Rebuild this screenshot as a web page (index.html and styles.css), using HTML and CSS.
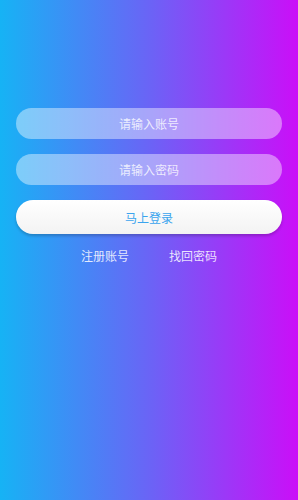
FILE: index.html
```html
<!DOCTYPE html>
<html lang="zh">
<head>
    <meta charset="UTF-8">
    <title>登录</title>
    <link rel="stylesheet" href="styles.css">
</head>
<body>
    <div class="login-page">
        <form class="login-form">
            <input class="field" type="text" placeholder="请输入账号">
            <input class="field" type="password" placeholder="请输入密码">
            <button class="login-btn" type="button">马上登录</button>
            <div class="links">
                <a href="#">注册账号</a>
                <a href="#">找回密码</a>
            </div>
        </form>
    </div>
</body>
</html>
```

FILE: styles.css
```css
body {
    margin: 0;
    font-family: "Noto Sans CJK SC", "Noto Sans", sans-serif;
}

.login-page {
    height: 500px;
    background: linear-gradient(90deg, #16b3f5, #6a64f6 50%, #cb0ef8);
    padding: 108px 16px 0;
    box-sizing: border-box;
}

.login-form {
    display: flex;
    flex-direction: column;
}

.field {
    height: 31px;
    border: none;
    border-radius: 16px;
    background: rgba(255, 255, 255, 0.42);
    text-align: center;
    font-family: inherit;
    font-size: 12px;
    color: #fff;
    outline: none;
    margin-bottom: 15px;
    padding: 0;
}

.field::placeholder {
    color: rgba(255, 255, 255, 0.8);
}

.login-btn {
    height: 34px;
    border: none;
    border-radius: 17px;
    background: linear-gradient(180deg, #ffffff, #f3f3f3);
    box-shadow: 0 2px 3px rgba(0, 0, 0, 0.2);
    color: #3aa4ee;
    font-family: inherit;
    font-size: 12px;
    padding: 0;
}

.links {
    display: flex;
    justify-content: center;
    gap: 40px;
    margin-top: 13px;
    font-size: 12px;
}

.links a {
    color: rgba(255, 255, 255, 0.85);
    text-decoration: none;
}
```
